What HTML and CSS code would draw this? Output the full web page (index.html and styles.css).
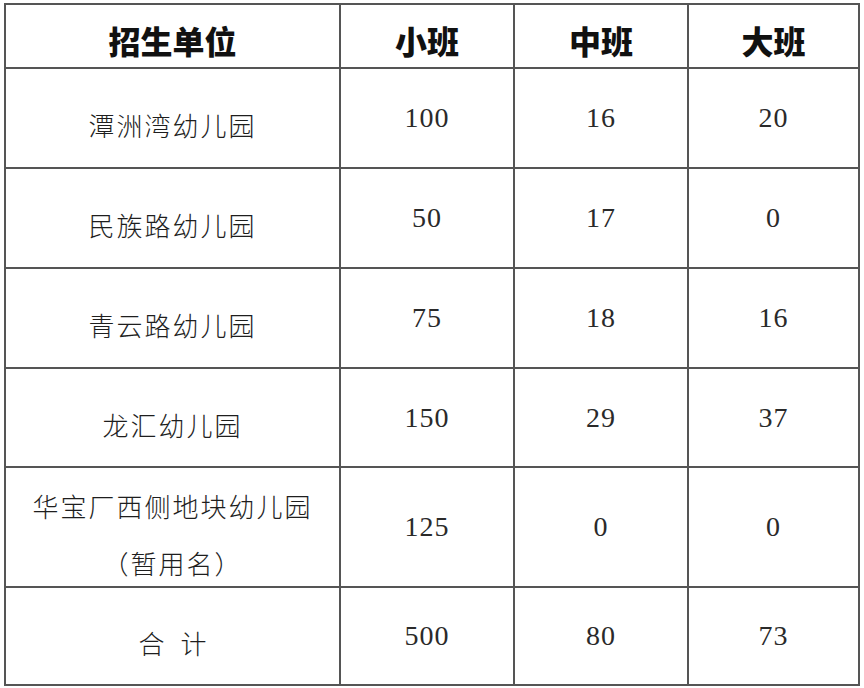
FILE: index.html
```html
<!DOCTYPE html>
<html>
<head>
<meta charset="utf-8">
<title>招生计划</title>
<link rel="stylesheet" href="styles.css">
</head>
<body>
<div class="table">
  <div class="cell head">招生单位</div>
  <div class="cell head">小班</div>
  <div class="cell head">中班</div>
  <div class="cell head">大班</div>

  <div class="cell name">潭洲湾幼儿园</div>
  <div class="cell num">100</div>
  <div class="cell num">16</div>
  <div class="cell num">20</div>

  <div class="cell name">民族路幼儿园</div>
  <div class="cell num">50</div>
  <div class="cell num">17</div>
  <div class="cell num">0</div>

  <div class="cell name">青云路幼儿园</div>
  <div class="cell num">75</div>
  <div class="cell num">18</div>
  <div class="cell num">16</div>

  <div class="cell name">龙汇幼儿园</div>
  <div class="cell num">150</div>
  <div class="cell num">29</div>
  <div class="cell num">37</div>

  <div class="cell name two-line"><span>华宝厂西侧地块幼儿园</span><span>（暂用名）</span></div>
  <div class="cell num">125</div>
  <div class="cell num">0</div>
  <div class="cell num">0</div>

  <div class="cell name total"><span>合</span><span>计</span></div>
  <div class="cell num">500</div>
  <div class="cell num">80</div>
  <div class="cell num">73</div>
</div>
</body>
</html>
```

FILE: styles.css
```css
html, body {
  margin: 0;
  padding: 0;
  background: #ffffff;
}

body {
  padding: 3px 4px 0 4px;
}

.table {
  width: 856px;
  box-sizing: border-box;
  display: grid;
  grid-template-columns: 333px 172px 172px 169px;
  grid-template-rows: 62px 98px 98px 98px 97px 118px 96px;
  gap: 2px;
  padding: 2px;
  background: #555555;
}

.cell {
  background: #ffffff;
  display: flex;
  align-items: center;
  justify-content: center;
  color: #1e1e1e;
}

.head {
  font-family: "Noto Sans CJK SC", sans-serif;
  font-weight: 900;
  font-size: 32px;
  padding-top: 7px;
  box-sizing: border-box;
  color: #111111;
}

.name {
  font-family: "Noto Sans CJK SC", sans-serif;
  font-weight: 300;
  font-size: 26px;
  letter-spacing: 2px;
  padding-top: 13px;
  box-sizing: border-box;
}

.two-line {
  flex-direction: column;
  line-height: 57px;
}

.total {
  gap: 16px;
  letter-spacing: 0;
}

.num {
  font-family: "Liberation Serif", "Times New Roman", serif;
  font-size: 28px;
  letter-spacing: 1px;
  color: #2a2a2a;
}
```
